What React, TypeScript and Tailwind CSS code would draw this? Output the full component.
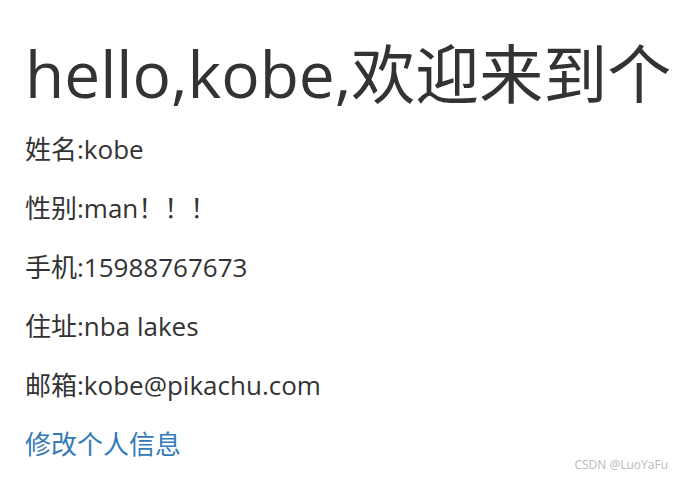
import React from 'react';

const user = {
  name: 'kobe',
  gender: 'man！！！',
  phone: '15988767673',
  address: 'nba lakes',
  email: 'kobe@pikachu.com',
};

const App = () => {
  return (
    <div
      className="relative w-[673px] h-[482px] overflow-hidden bg-white text-[#333333]"
      style={{ fontFamily: '"Open Sans", "Noto Sans CJK SC", sans-serif' }}
    >
      <div className="px-[25px]">
        <h1 className="whitespace-nowrap text-[64px] leading-[68px] font-normal pt-[40px] mb-[22px]">
          hello,{user.name},欢迎来到个人中心
        </h1>
        <p className="text-[26px] leading-[39px] mb-[20px]">姓名:{user.name}</p>
        <p className="text-[26px] leading-[39px] mb-[20px]">性别:{user.gender}</p>
        <p className="text-[26px] leading-[39px] mb-[20px]">手机:{user.phone}</p>
        <p className="text-[26px] leading-[39px] mb-[20px]">住址:{user.address}</p>
        <p className="text-[26px] leading-[39px] mb-[20px]">邮箱:{user.email}</p>
        <a href="#" className="text-[26px] leading-[39px] text-[#337ab7]">
          修改个人信息
        </a>
      </div>
      <span className="absolute right-[5px] bottom-[8px] text-[12px] text-[#bbbbbb]">
        CSDN @LuoYaFu
      </span>
    </div>
  );
};

export default App;
